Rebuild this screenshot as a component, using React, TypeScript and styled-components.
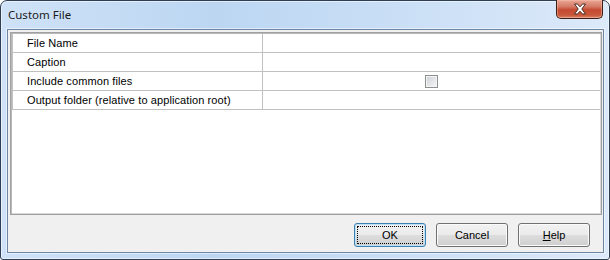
import React from "react";
import styled, { createGlobalStyle } from "styled-components";

const Global = createGlobalStyle`
  html, body { margin: 0; padding: 0; background: #ffffff; }
  body { font-family: "Liberation Sans", Arial, sans-serif; }
  * { box-sizing: border-box; }
`;

const Window = styled.div`
  width: 610px;
  height: 260px;
  display: flex;
  flex-direction: column;
  border: 1px solid #2e3f55;
  border-radius: 7px 7px 3px 3px;
  background: linear-gradient(90deg, #cfe2f7 0%, #bcd6f2 35%, #c7ddf5 60%, #dce9f9 100%);
  padding: 0 5px 6px 6px;
  box-shadow: inset 0 0 0 1px rgba(255, 255, 255, 0.55);
`;

const TitleBar = styled.div`
  height: 28px;
  display: flex;
  align-items: flex-start;
  justify-content: space-between;
`;

const Title = styled.div`
  font-family: "Noto Sans", "Open Sans", sans-serif;
  font-size: 11.5px;
  color: #1b1b1b;
  padding: 6px 0 0 1px;
  line-height: 16px;
`;

const CloseButton = styled.div`
  width: 47px;
  height: 19px;
  margin-top: -1px;
  margin-right: 1px;
  border: 1px solid #3d1f18;
  border-top: none;
  border-radius: 0 0 5px 5px;
  background: linear-gradient(180deg, #e9a795 0%, #d67e69 35%, #c44a31 55%, #c9583c 85%, #d88b6f 100%);
  box-shadow: inset 0 0 0 1px rgba(255, 200, 180, 0.45);
  display: flex;
  align-items: center;
  justify-content: center;
`;

const Client = styled.div`
  flex: 1;
  display: flex;
  flex-direction: column;
  background: #f0f0f0;
  border: 1px solid #6d86a3;
  box-shadow: 0 0 0 1px rgba(255, 255, 255, 0.5);
  padding: 2px 1px 5px 2px;
`;

const Grid = styled.div`
  height: 183px;
  background: #ffffff;
  border: 1px solid #a0a0a0;
  box-shadow: inset 1px 1px 0 #b9b9b9, inset -1px -1px 0 #d9d9d9;
  padding: 1px 1px 0 1px;
  display: flex;
  flex-direction: column;
`;

const Row = styled.div`
  display: grid;
  grid-template-columns: 250px 1fr;
  height: 19px;
  border-bottom: 1px solid #c0c0c0;
  border-left: 1px solid #c0c0c0;
`;

const Label = styled.div`
  font-family: "Liberation Sans", Arial, sans-serif;
  font-size: 11px;
  letter-spacing: 0.1px;
  color: #000;
  line-height: 18px;
  padding-left: 14px;
  border-right: 1px solid #c0c0c0;
  white-space: nowrap;
`;

const Value = styled.div`
  display: flex;
  align-items: center;
  justify-content: center;
`;

const CheckBox = styled.div`
  width: 13px;
  height: 13px;
  border: 1px solid #8e8f8f;
  background: linear-gradient(135deg, #cbcfd5 0%, #e4e6e9 55%, #f6f6f6 100%);
  box-shadow: inset 0 0 0 1px #f4f4f4;
`;

const ButtonBar = styled.div`
  margin-top: auto;
  display: flex;
  justify-content: flex-end;
  gap: 10px;
  padding-right: 12px;
`;

const Button = styled.div<{ $default?: boolean }>`
  width: 72px;
  height: 24px;
  border: 1px solid ${(p) => (p.$default ? "#3c7fb1" : "#707070")};
  border-radius: 3px;
  background: linear-gradient(180deg, #f2f2f2 0%, #ebebeb 48%, #dddddd 52%, #cfcfcf 100%);
  box-shadow: inset 0 0 0 1px ${(p) => (p.$default ? "#bfe1f5" : "#fbfbfb")};
  display: flex;
  align-items: center;
  justify-content: center;
  font-family: "Liberation Sans", Arial, sans-serif;
  font-size: 11px;
  color: #000;
  position: relative;
`;

const FocusRing = styled.div`
  position: absolute;
  inset: 2px;
  border: 1px dotted #000;
`;

const Underline = styled.span`
  text-decoration: underline;
`;

const CloseIcon = () => (
  <svg width="14" height="12" viewBox="0 0 14 12">
    <path
      d="M1.5 1 L4.5 1 L7 3.8 L9.5 1 L12.5 1 L8.8 6 L12.5 11 L9.5 11 L7 8.2 L4.5 11 L1.5 11 L5.2 6 Z"
      fill="#ffffff"
      stroke="#4a2a22"
      strokeWidth="1"
      strokeLinejoin="round"
    />
  </svg>
);

const rows: { label: string; check?: boolean }[] = [
  { label: "File Name" },
  { label: "Caption" },
  { label: "Include common files", check: true },
  { label: "Output folder (relative to application root)" },
];

export default function App() {
  return (
    <>
      <Global />
      <Window>
        <TitleBar>
          <Title>Custom File</Title>
          <CloseButton>
            <CloseIcon />
          </CloseButton>
        </TitleBar>
        <Client>
          <Grid>
            {rows.map((r) => (
              <Row key={r.label}>
                <Label>{r.label}</Label>
                <Value>{r.check && <CheckBox />}</Value>
              </Row>
            ))}
          </Grid>
          <ButtonBar>
            <Button $default>
              <FocusRing />
              OK
            </Button>
            <Button>Cancel</Button>
            <Button>
              <span>
                <Underline>H</Underline>elp
              </span>
            </Button>
          </ButtonBar>
        </Client>
      </Window>
    </>
  );
}
